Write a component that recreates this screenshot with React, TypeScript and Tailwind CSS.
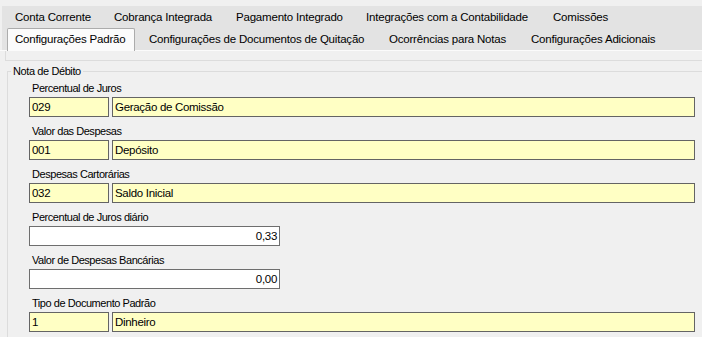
import React from "react";

interface Tab {
  label: string;
  width: number;
  selected?: boolean;
}

const row1: Tab[] = [
  { label: "Conta Corrente", width: 99 },
  { label: "Cobrança Integrada", width: 122 },
  { label: "Pagamento Integrado", width: 130 },
  { label: "Integrações com a Contabilidade", width: 187 },
  { label: "Comissões", width: 72 },
];

const row2: Tab[] = [
  { label: "Configurações Padrão", width: 128, selected: true },
  { label: "Configurações de Documentos de Quitação", width: 240 },
  { label: "Ocorrências para Notas", width: 142 },
  { label: "Configurações Adicionais", width: 150 },
];

interface Field {
  label: string;
  code?: string;
  desc?: string;
  value?: string;
}

const fields: Field[] = [
  { label: "Percentual de Juros", code: "029", desc: "Geração de Comissão" },
  { label: "Valor das Despesas", code: "001", desc: "Depósito" },
  { label: "Despesas Cartorárias", code: "032", desc: "Saldo Inicial" },
  { label: "Percentual de Juros diário", value: "0,33" },
  { label: "Valor de Despesas Bancárias", value: "0,00" },
  { label: "Tipo de Documento Padrão", code: "1", desc: "Dinheiro" },
];

const TabRow = ({ tabs }: { tabs: Tab[] }) => (
  <div className="flex flex-row h-[22px] pl-[5px]">
    {tabs.map((tab, i) =>
      tab.selected ? (
        <div
          key={i}
          className="h-[23px] mr-[6px] bg-[#fbfbfb] border border-b-0 border-[#acacac] rounded-t-[2px] pl-[7px] leading-[21px] text-[11.5px] tracking-[-0.2px] whitespace-nowrap relative z-10 shrink-0"
          style={{ width: tab.width }}
        >
          {tab.label}
        </div>
      ) : (
        <div
          key={i}
          className="h-[22px] pl-[8px] leading-[22px] text-[11.5px] tracking-[-0.2px] whitespace-nowrap shrink-0"
          style={{ width: tab.width }}
        >
          {tab.label}
        </div>
      )
    )}
  </div>
);

const FieldBlock = ({ field }: { field: Field }) => (
  <div className="flex flex-col">
    <div className="h-[14px] leading-[14px] pl-[3px] text-[11px] tracking-[-0.45px] whitespace-nowrap">
      {field.label}
    </div>
    {field.value !== undefined ? (
      <div className="mt-[2px] h-[20px] w-[251px] bg-white border border-[#6e6e6e] text-right pr-[2px] leading-[18px] text-[11.5px] tracking-[-0.3px]">
        {field.value}
      </div>
    ) : (
      <div className="mt-[2px] flex flex-row gap-[3px]">
        <div className="h-[20px] w-[80px] bg-[#ffffc4] border border-[#646464] pl-[2px] leading-[18px] text-[11.5px] tracking-[-0.3px]">
          {field.code}
        </div>
        <div className="h-[20px] w-[583px] bg-[#ffffc4] border border-[#646464] pl-[2px] leading-[18px] text-[11.5px] tracking-[-0.3px]">
          {field.desc}
        </div>
      </div>
    )}
  </div>
);

export default function App() {
  return (
    <div className="w-[702px] h-[337px] overflow-hidden bg-[#f0f0f0] text-black font-['Liberation_Sans',Arial,sans-serif]">
      <div className="pt-[6px]">
        <div className="ml-[2px] bg-[#e3e3e3] h-[44px] flex flex-col">
          <TabRow tabs={row1} />
          <TabRow tabs={row2} />
        </div>
        <div className="h-px bg-[#fbfbfb]" />
        <div className="ml-[5px] h-[10px] border-l border-b border-[#dcdcdc]" />
        <div className="mt-[10px] ml-[7px] border-l border-t border-[#dcdcdc] h-[300px] relative">
          <div className="absolute left-[3px] top-[-8px] bg-[#f0f0f0] px-[2px] h-[14px] leading-[14px] text-[11px] tracking-[-0.4px]">
            Nota de Débito
          </div>
          <div className="pt-[9px] pl-[21px] flex flex-col gap-[7px]">
            {fields.map((f, i) => (
              <FieldBlock key={i} field={f} />
            ))}
          </div>
        </div>
      </div>
    </div>
  );
}
